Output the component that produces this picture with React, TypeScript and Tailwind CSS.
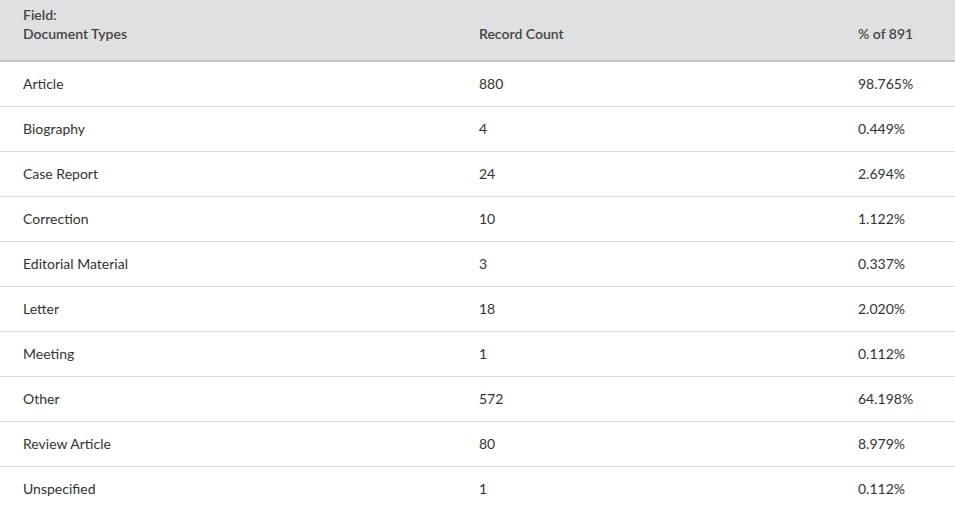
const rows: [string, string, string][] = [
  ["Article", "880", "98.765%"],
  ["Biography", "4", "0.449%"],
  ["Case Report", "24", "2.694%"],
  ["Correction", "10", "1.122%"],
  ["Editorial Material", "3", "0.337%"],
  ["Letter", "18", "2.020%"],
  ["Meeting", "1", "0.112%"],
  ["Other", "572", "64.198%"],
  ["Review Article", "80", "8.979%"],
  ["Unspecified", "1", "0.112%"],
];

export default function App() {
  return (
    <div className="w-[955px] h-[509px] overflow-hidden bg-white text-[14px] text-[#333] font-['Lato','Noto_Sans',sans-serif]">
      <div className="grid grid-cols-[456px_379px_120px] h-[62px] items-end bg-[#e0e0e3] border-b-2 border-[#c4c4c6] pb-[17px] font-semibold text-[#444]">
        <div className="pl-[23px] leading-[19px]">
          Field:
          <br />
          Document Types
        </div>
        <div className="pl-[23px] leading-[19px]">Record Count</div>
        <div className="pl-[23px] leading-[19px]">% of 891</div>
      </div>
      {rows.map(([name, count, pct]) => (
        <div
          key={name}
          className="grid grid-cols-[456px_379px_120px] h-[45px] items-center pb-px border-b border-[#dcdcdc]"
        >
          <div className="pl-[23px]">{name}</div>
          <div className="pl-[23px]">{count}</div>
          <div className="pl-[23px]">{pct}</div>
        </div>
      ))}
    </div>
  );
}
